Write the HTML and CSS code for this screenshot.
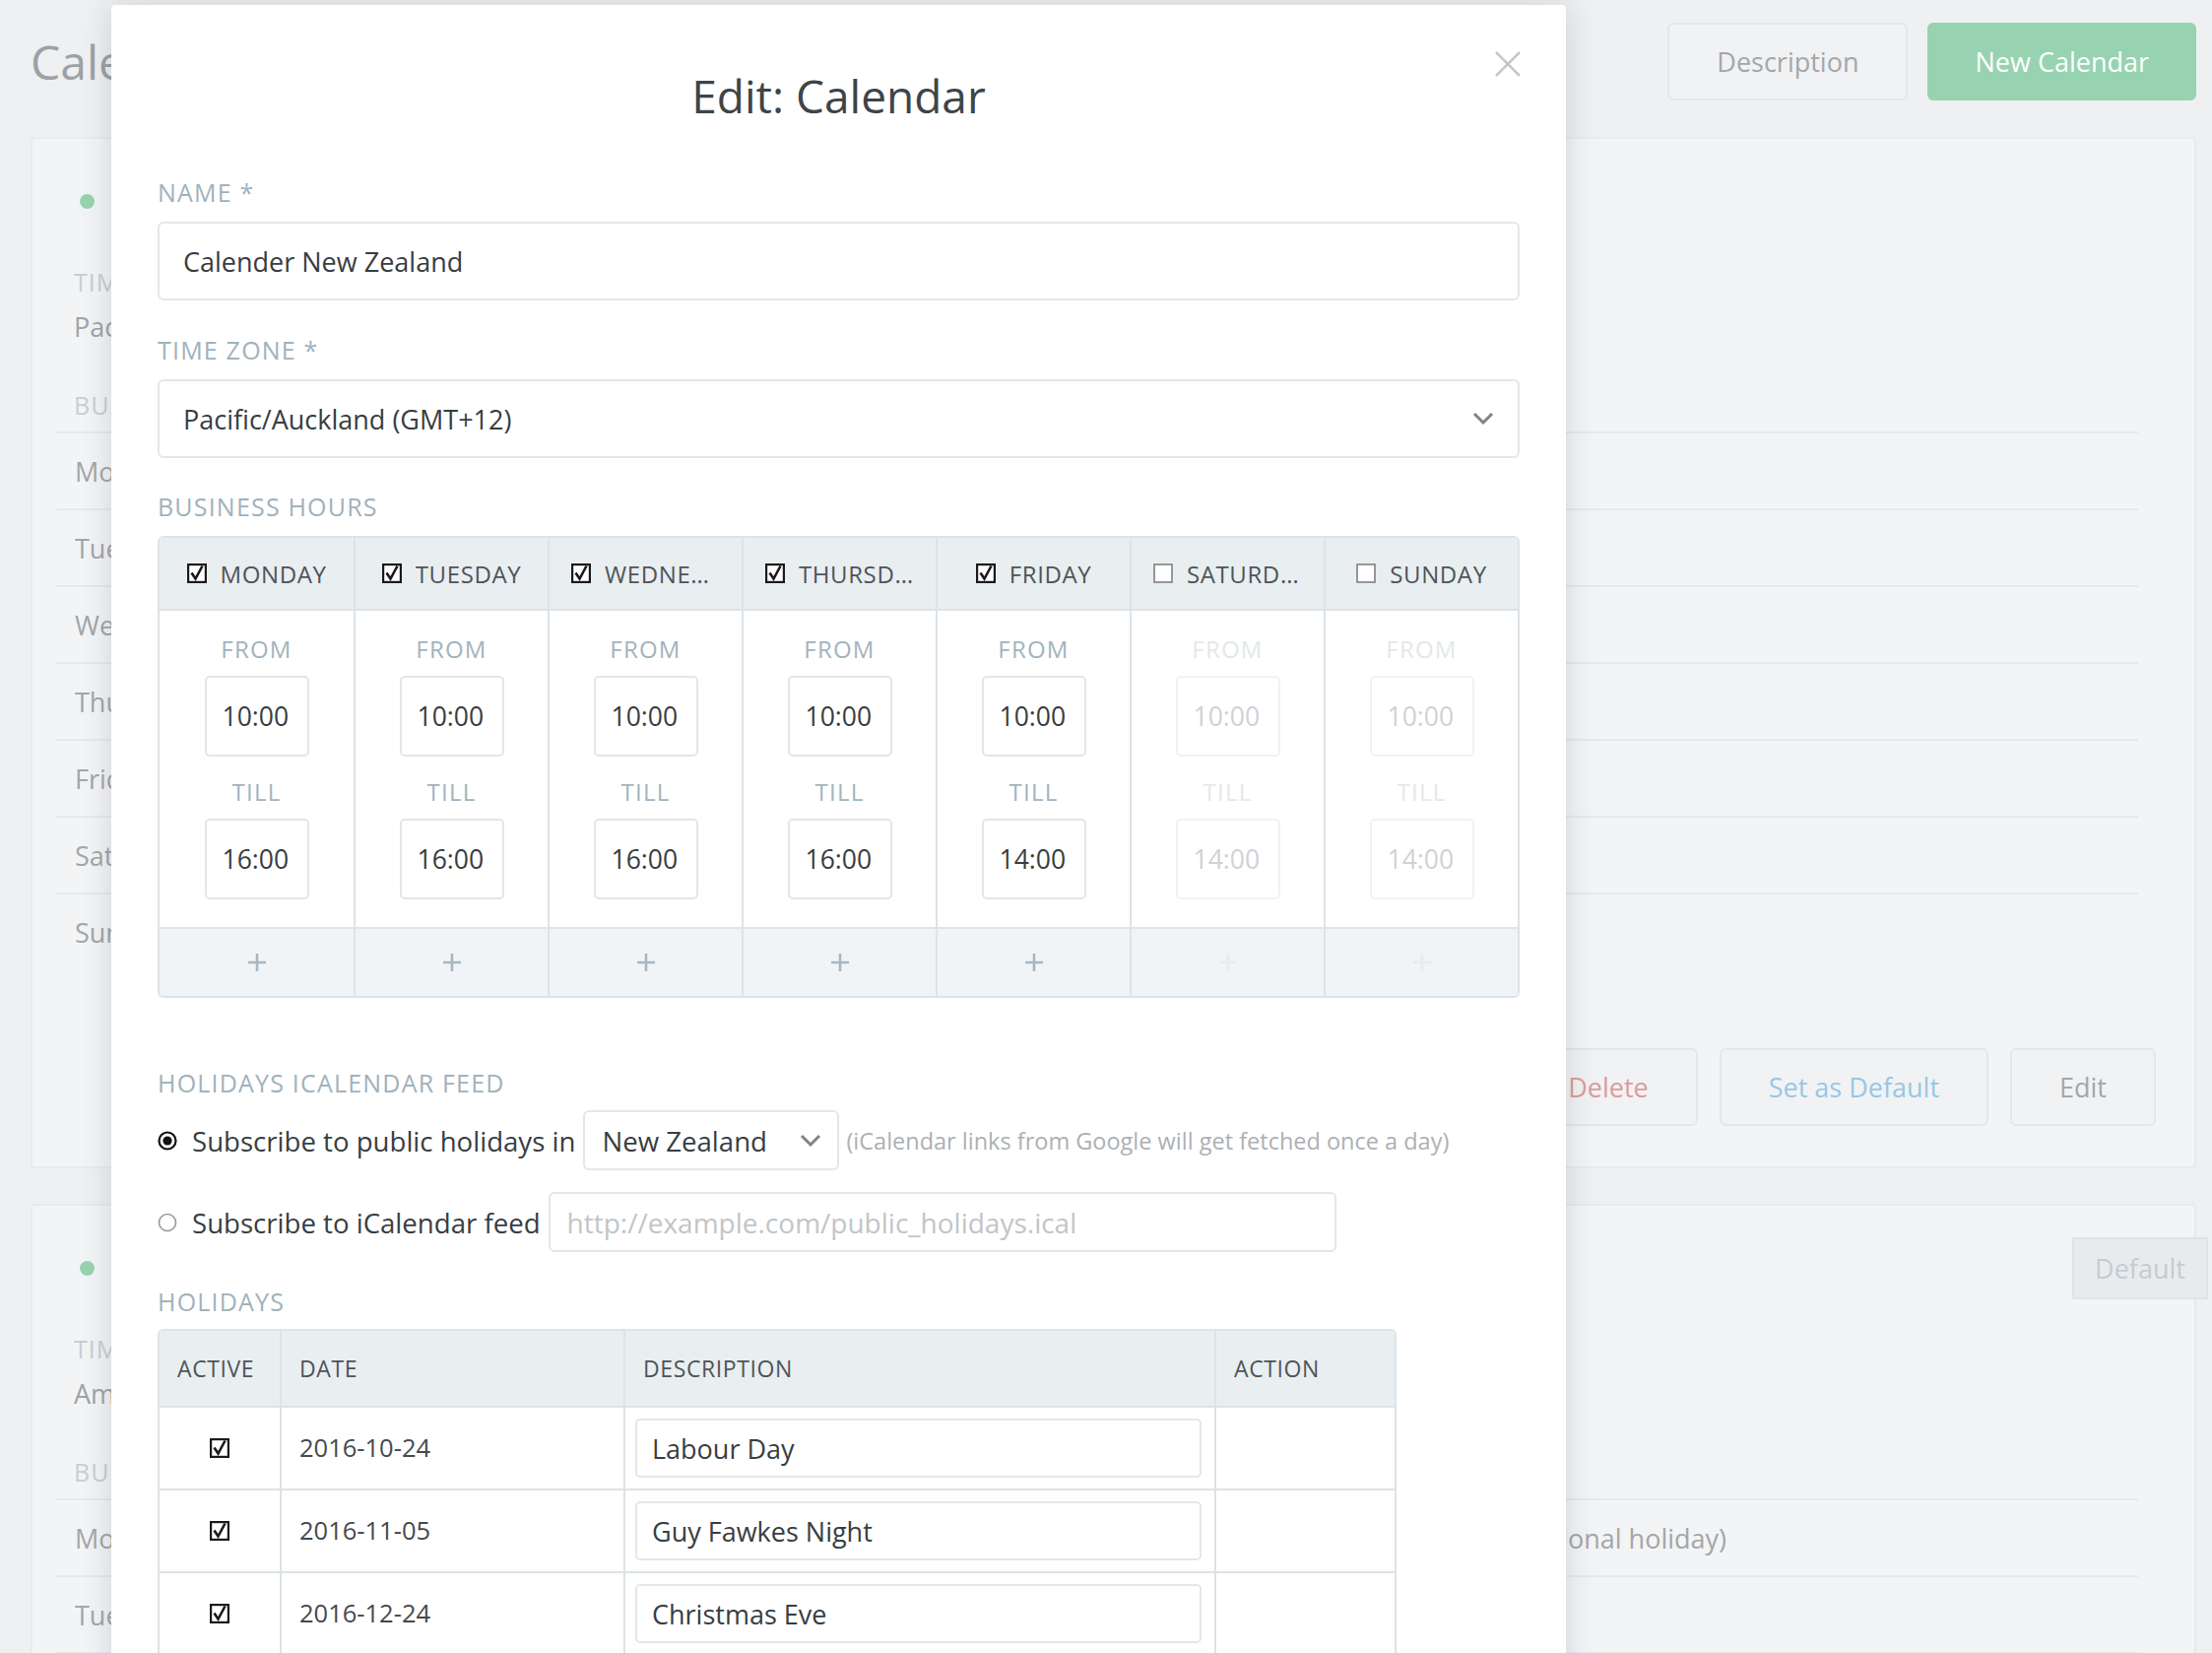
FILE: index.html
```html
<!DOCTYPE html>
<html lang="en">
<head>
<meta charset="utf-8">
<title>Edit: Calendar</title>
<link rel="stylesheet" href="styles.css">
</head>
<body>
<div class="app">
  <header class="page-head">
    <h1 class="page-title">Calendars</h1>
    <div class="page-actions">
      <button class="btn">Description</button>
      <button class="btn btn-green">New Calendar</button>
    </div>
  </header>

  <section class="card">
    <div class="card-head"><span class="dot"></span></div>
    <div class="bg-label">Timezone</div>
    <div class="bg-value">Pacific</div>
    <div class="bg-label bg-label-gap">Business</div>
    <div class="bg-rows">
      <div class="bg-row"><span>Monday</span><span></span><span></span></div>
      <div class="bg-row"><span>Tuesday</span><span></span><span></span></div>
      <div class="bg-row"><span>Wednesday</span><span></span><span></span></div>
      <div class="bg-row"><span>Thursday</span><span></span><span></span></div>
      <div class="bg-row"><span>Friday</span><span></span><span></span></div>
      <div class="bg-row"><span>Saturday</span><span></span><span></span></div>
      <div class="bg-row"><span>Sunday</span><span></span><span></span></div>
    </div>
    <div class="card-actions">
      <button class="btn btn-danger">Delete</button>
      <button class="btn btn-info">Set as Default</button>
      <button class="btn">Edit</button>
    </div>
  </section>

  <section class="card card-second">
    <div class="card-head"><span class="dot"></span><span class="badge">Default</span></div>
    <div class="bg-label">Time</div>
    <div class="bg-value">America</div>
    <div class="bg-label bg-label-gap">Business</div>
    <div class="bg-rows">
      <div class="bg-row"><span>Monday</span><span></span><span>(national holiday)</span></div>
      <div class="bg-row"><span>Tuesday</span><span></span><span></span></div>
      <div class="bg-row"><span>Wednesday</span><span></span><span></span></div>
    </div>
  </section>
</div>

<div class="modal">
  <button class="close" aria-label="Close">
    <svg viewBox="0 0 26 26" width="26" height="26"><path d="M1 1L25 25M25 1L1 25" stroke="#c4c7ca" stroke-width="2.5" fill="none"/></svg>
  </button>
  <div class="modal-head">
    <h2 class="modal-title">Edit: Calendar</h2>
  </div>

  <div class="field-label label-name">Name *</div>
  <div class="form-input">Calender New Zealand</div>

  <div class="field-label label-gap">Time Zone *</div>
  <div class="form-input form-select">
    <span>Pacific/Auckland (GMT+12)</span>
    <svg viewBox="0 0 22 14" width="22" height="14"><path d="M2 2L11 11L20 2" fill="none" stroke="#808285" stroke-width="3"/></svg>
  </div>

  <div class="field-label label-gap-b">Business Hours</div>
  <div class="hours">
    <div class="day">
      <div class="day-head"><svg class="cb" viewBox="0 0 20 20" width="20" height="20"><rect x="1.1" y="1.1" width="17.8" height="17.8" fill="#fff" stroke="#1a1a1a" stroke-width="2.2"/><path d="M4.5 9.5L8.5 15.5L15.5 2.5" fill="none" stroke="#1a1a1a" stroke-width="2.6"/></svg><span class="day-name">Monday</span></div>
      <div class="day-body"><div class="mini-label">From</div><div class="time-input">10:00</div><div class="mini-label mini-till">Till</div><div class="time-input">16:00</div></div>
      <div class="day-foot"><svg viewBox="0 0 20 20" width="20" height="20"><path d="M10 1V19M1 10H19" stroke="currentColor" stroke-width="2.6"/></svg></div>
    </div>
    <div class="day">
      <div class="day-head"><svg class="cb" viewBox="0 0 20 20" width="20" height="20"><rect x="1.1" y="1.1" width="17.8" height="17.8" fill="#fff" stroke="#1a1a1a" stroke-width="2.2"/><path d="M4.5 9.5L8.5 15.5L15.5 2.5" fill="none" stroke="#1a1a1a" stroke-width="2.6"/></svg><span class="day-name">Tuesday</span></div>
      <div class="day-body"><div class="mini-label">From</div><div class="time-input">10:00</div><div class="mini-label mini-till">Till</div><div class="time-input">16:00</div></div>
      <div class="day-foot"><svg viewBox="0 0 20 20" width="20" height="20"><path d="M10 1V19M1 10H19" stroke="currentColor" stroke-width="2.6"/></svg></div>
    </div>
    <div class="day">
      <div class="day-head"><svg class="cb" viewBox="0 0 20 20" width="20" height="20"><rect x="1.1" y="1.1" width="17.8" height="17.8" fill="#fff" stroke="#1a1a1a" stroke-width="2.2"/><path d="M4.5 9.5L8.5 15.5L15.5 2.5" fill="none" stroke="#1a1a1a" stroke-width="2.6"/></svg><span class="day-name">Wednesday</span></div>
      <div class="day-body"><div class="mini-label">From</div><div class="time-input">10:00</div><div class="mini-label mini-till">Till</div><div class="time-input">16:00</div></div>
      <div class="day-foot"><svg viewBox="0 0 20 20" width="20" height="20"><path d="M10 1V19M1 10H19" stroke="currentColor" stroke-width="2.6"/></svg></div>
    </div>
    <div class="day">
      <div class="day-head"><svg class="cb" viewBox="0 0 20 20" width="20" height="20"><rect x="1.1" y="1.1" width="17.8" height="17.8" fill="#fff" stroke="#1a1a1a" stroke-width="2.2"/><path d="M4.5 9.5L8.5 15.5L15.5 2.5" fill="none" stroke="#1a1a1a" stroke-width="2.6"/></svg><span class="day-name">Thursday</span></div>
      <div class="day-body"><div class="mini-label">From</div><div class="time-input">10:00</div><div class="mini-label mini-till">Till</div><div class="time-input">16:00</div></div>
      <div class="day-foot"><svg viewBox="0 0 20 20" width="20" height="20"><path d="M10 1V19M1 10H19" stroke="currentColor" stroke-width="2.6"/></svg></div>
    </div>
    <div class="day">
      <div class="day-head"><svg class="cb" viewBox="0 0 20 20" width="20" height="20"><rect x="1.1" y="1.1" width="17.8" height="17.8" fill="#fff" stroke="#1a1a1a" stroke-width="2.2"/><path d="M4.5 9.5L8.5 15.5L15.5 2.5" fill="none" stroke="#1a1a1a" stroke-width="2.6"/></svg><span class="day-name">Friday</span></div>
      <div class="day-body"><div class="mini-label">From</div><div class="time-input">10:00</div><div class="mini-label mini-till">Till</div><div class="time-input">14:00</div></div>
      <div class="day-foot"><svg viewBox="0 0 20 20" width="20" height="20"><path d="M10 1V19M1 10H19" stroke="currentColor" stroke-width="2.6"/></svg></div>
    </div>
    <div class="day day-off">
      <div class="day-head"><svg class="cb" viewBox="0 0 20 20" width="20" height="20"><rect x="1" y="1" width="18" height="18" fill="#fff" stroke="#8c8c8c" stroke-width="1.8"/></svg><span class="day-name">Saturday</span></div>
      <div class="day-body"><div class="mini-label">From</div><div class="time-input">10:00</div><div class="mini-label mini-till">Till</div><div class="time-input">14:00</div></div>
      <div class="day-foot"><svg viewBox="0 0 20 20" width="20" height="20"><path d="M10 1V19M1 10H19" stroke="currentColor" stroke-width="2.6"/></svg></div>
    </div>
    <div class="day day-off">
      <div class="day-head"><svg class="cb" viewBox="0 0 20 20" width="20" height="20"><rect x="1" y="1" width="18" height="18" fill="#fff" stroke="#8c8c8c" stroke-width="1.8"/></svg><span class="day-name">Sunday</span></div>
      <div class="day-body"><div class="mini-label">From</div><div class="time-input">10:00</div><div class="mini-label mini-till">Till</div><div class="time-input">14:00</div></div>
      <div class="day-foot"><svg viewBox="0 0 20 20" width="20" height="20"><path d="M10 1V19M1 10H19" stroke="currentColor" stroke-width="2.6"/></svg></div>
    </div>
  </div>

  <div class="field-label label-gap-feed">Holidays iCalendar Feed</div>
  <div class="radio-row radio-first">
    <svg class="radio" viewBox="0 0 20 20" width="20" height="20"><circle cx="10" cy="10" r="8.5" fill="#fff" stroke="#111" stroke-width="2.2"/><circle cx="10" cy="10" r="4.6" fill="#111"/></svg>
    <span class="radio-text">Subscribe to public holidays in</span>
    <div class="small-select"><span>New Zealand</span><svg viewBox="0 0 22 14" width="22" height="14"><path d="M2 2L11 11L20 2" fill="none" stroke="#808285" stroke-width="3"/></svg></div>
    <span class="hint">(iCalendar links from Google will get fetched once a day)</span>
  </div>
  <div class="radio-row radio-second">
    <svg class="radio" viewBox="0 0 20 20" width="20" height="20"><circle cx="10" cy="10" r="8.5" fill="#fff" stroke="#9a9a9a" stroke-width="1.6"/></svg>
    <span class="radio-text">Subscribe to iCalendar feed</span>
    <div class="url-input">http://example.com/public_holidays.ical</div>
  </div>

  <div class="field-label label-gap">Holidays</div>
  <div class="holidays">
    <div class="h-row h-head">
      <div class="h-cell">Active</div>
      <div class="h-cell">Date</div>
      <div class="h-cell">Description</div>
      <div class="h-cell">Action</div>
    </div>
    <div class="h-row">
      <div class="h-cell h-check"><svg viewBox="0 0 20 20" width="20" height="20"><rect x="1.1" y="1.1" width="17.8" height="17.8" fill="#fff" stroke="#1a1a1a" stroke-width="2.2"/><path d="M4.5 9.5L8.5 15.5L15.5 2.5" fill="none" stroke="#1a1a1a" stroke-width="2.6"/></svg></div>
      <div class="h-cell h-date">2016-10-24</div>
      <div class="h-cell"><div class="desc-input">Labour Day</div></div>
      <div class="h-cell"></div>
    </div>
    <div class="h-row">
      <div class="h-cell h-check"><svg viewBox="0 0 20 20" width="20" height="20"><rect x="1.1" y="1.1" width="17.8" height="17.8" fill="#fff" stroke="#1a1a1a" stroke-width="2.2"/><path d="M4.5 9.5L8.5 15.5L15.5 2.5" fill="none" stroke="#1a1a1a" stroke-width="2.6"/></svg></div>
      <div class="h-cell h-date">2016-11-05</div>
      <div class="h-cell"><div class="desc-input">Guy Fawkes Night</div></div>
      <div class="h-cell"></div>
    </div>
    <div class="h-row">
      <div class="h-cell h-check"><svg viewBox="0 0 20 20" width="20" height="20"><rect x="1.1" y="1.1" width="17.8" height="17.8" fill="#fff" stroke="#1a1a1a" stroke-width="2.2"/><path d="M4.5 9.5L8.5 15.5L15.5 2.5" fill="none" stroke="#1a1a1a" stroke-width="2.6"/></svg></div>
      <div class="h-cell h-date">2016-12-24</div>
      <div class="h-cell"><div class="desc-input">Christmas Eve</div></div>
      <div class="h-cell"></div>
    </div>
  </div>
</div>
</body>
</html>
```

FILE: styles.css
```css
* { box-sizing: border-box; }
html, body { margin: 0; padding: 0; }
body {
  width: 2246px;
  height: 1678px;
  overflow: hidden;
  position: relative;
  background: #eef0f2;
  font-family: "Open Sans", "Noto Sans", sans-serif;
}

/* ---------- background page ---------- */
.app { padding: 23px 16px 0 31px; }
.page-head {
  display: flex;
  justify-content: space-between;
  align-items: center;
  height: 79px;
}
.page-title {
  margin: 0;
  font-size: 48px;
  font-weight: 400;
  line-height: 79px;
  color: #9da1a5;
}
.page-actions { display: flex; gap: 20px; }
.btn {
  height: 79px;
  padding: 0 48px;
  border-radius: 6px;
  border: 2px solid #e4e6e9;
  background: #f1f2f4;
  font-family: inherit;
  font-size: 27px;
  line-height: 75px;
  color: #a4a7aa;
}
.btn-green { padding: 0 46px; background: #97d3b0; border-color: #97d3b0; color: #fff; }
.btn-danger { color: #dc9c9c; }
.btn-info { color: #98c7e5; }

.card {
  margin-top: 37px;
  background: #f3f4f6;
  border: 2px solid #e8eaed;
  border-radius: 4px;
  padding: 0 39px 41px 42px;
}
.card-second { margin-top: 36px; }
.card-head {
  display: flex;
  align-items: center;
  height: 95px;
  padding-top: 32px;
}
.dot {
  width: 15px;
  height: 15px;
  border-radius: 50%;
  background: #98d3b0;
  margin-left: 6px;
}
.badge {
  margin-left: auto;
  margin-right: -53px;
  height: 63px;
  width: 138px;
  background: #e8ebee;
  border: 2px solid #dfe3e6;
  color: #c5cbd0;
  font-size: 27px;
  line-height: 59px;
  text-align: center;
}
.bg-label {
  margin-top: 35px;
  font-size: 25px;
  line-height: 30px;
  letter-spacing: 1px;
  text-transform: uppercase;
  color: #c6cfd4;
}
.bg-value {
  margin-top: 13px;
  font-size: 27px;
  line-height: 36px;
  color: #9fa3a7;
}
.bg-label-gap { margin-top: 46px; }
.bg-rows { margin: 12px 18px 0 -18px; }
.bg-row {
  display: grid;
  grid-template-columns: 200px 1260px auto;
  align-items: center;
  height: 78px;
  padding-left: 19px;
  border-top: 2px solid #e6e9ec;
  font-size: 27px;
  color: #a3a6a9;
}
.card-actions {
  display: flex;
  justify-content: flex-end;
  gap: 22px;
  margin-top: 80px;
}

/* ---------- modal ---------- */
.modal {
  position: absolute;
  left: 113px;
  top: 5px;
  width: 1477px;
  height: 1720px;
  background: #fff;
  border-radius: 4px;
  box-shadow: 0 0 32px rgba(40, 50, 60, 0.16);
  padding: 0 47px;
  color: #3b4044;
}
.close {
  position: absolute;
  top: 47px;
  right: 46px;
  width: 26px;
  height: 26px;
  padding: 0;
  border: 0;
  background: none;
}
.close svg { display: block; }
.modal-head { padding-top: 65px; text-align: center; }
.modal-title {
  margin: 0;
  font-size: 46px;
  font-weight: 400;
  line-height: 54px;
  color: #3e4447;
}

.field-label {
  font-size: 25px;
  line-height: 30px;
  letter-spacing: 1.2px;
  text-transform: uppercase;
  color: #9fb2bc;
}
.label-name { margin-top: 56px; }
.label-gap { margin-top: 35px; }
.label-gap-b { margin-top: 34px; }
.label-gap-feed { margin-top: 71px; }

.form-input {
  margin-top: 15px;
  height: 80px;
  border: 2px solid #e4e7ea;
  border-radius: 6px;
  padding: 0 24px;
  display: flex;
  align-items: center;
  font-size: 27px;
  color: #383d41;
}
.form-select { justify-content: space-between; padding-right: 24px; }

/* business hours */
.hours {
  margin-top: 15px;
  display: grid;
  grid-template-columns: repeat(7, 1fr);
  border: 2px solid #dde3e7;
  border-radius: 6px;
  overflow: hidden;
}
.day { min-width: 0; display: flex; flex-direction: column; }
.day + .day { border-left: 2px solid #dde3e7; }
.day-head {
  height: 74px;
  border-bottom: 2px solid #dde3e7;
  background: #e9eef1;
  display: flex;
  align-items: center;
  justify-content: center;
  gap: 14px;
  padding: 0 22px;
}
.cb { flex: none; display: block; }
.day-name {
  min-width: 0;
  white-space: nowrap;
  overflow: hidden;
  text-overflow: ellipsis;
  font-size: 24px;
  letter-spacing: 0.6px;
  text-transform: uppercase;
  color: #4f5458;
}
.day-body {
  height: 321px;
  padding-top: 24px;
  display: flex;
  flex-direction: column;
  align-items: center;
}
.mini-label {
  font-size: 24px;
  line-height: 30px;
  letter-spacing: 1.2px;
  text-transform: uppercase;
  color: #a1b4be;
}
.mini-till { margin-top: 21px; }
.time-input {
  margin-top: 12px;
  width: 106px;
  height: 82px;
  border: 2px solid #e3e6e9;
  border-radius: 5px;
  padding-left: 16px;
  font-size: 26.5px;
  line-height: 78px;
  color: #383d41;
}
.day-foot {
  height: 70px;
  border-top: 2px solid #dde3e7;
  background: #f1f4f6;
  display: flex;
  align-items: center;
  justify-content: center;
  color: #a6b7c0;
}
.day-foot svg { display: block; }
.day-off .mini-label { color: #e3e8eb; }
.day-off .time-input { border-color: #f0f2f4; color: #cfd2d4; }
.day-off .day-foot { color: #e6ebee; }

/* holidays feed */
.radio-row {
  display: flex;
  align-items: center;
  height: 61px;
}
.radio-first { margin-top: 13px; }
.radio-second { margin-top: 22px; }
.radio { flex: none; display: block; }
.radio-text {
  margin-left: 15px;
  font-size: 27.6px;
  color: #383d41;
  white-space: nowrap;
}
.small-select {
  margin-left: 8px;
  width: 260px;
  height: 61px;
  border: 2px solid #e4e7ea;
  border-radius: 6px;
  padding: 0 16px 0 17px;
  display: flex;
  align-items: center;
  justify-content: space-between;
  font-size: 27.6px;
  color: #383d41;
}
.hint {
  margin-left: 7px;
  font-size: 23.5px;
  color: #adb0b3;
  white-space: nowrap;
}
.url-input {
  margin-left: 8px;
  width: 800px;
  height: 61px;
  border: 2px solid #e4e7ea;
  border-radius: 6px;
  padding-left: 17px;
  display: flex;
  align-items: center;
  font-size: 28px;
  color: #c2c5c8;
}

/* holidays table */
.holidays {
  margin-top: 13px;
  width: 1258px;
  border: 2px solid #dde3e7;
  border-bottom: 0;
  border-radius: 6px 6px 0 0;
  overflow: hidden;
}
.h-row {
  display: grid;
  grid-template-columns: 122px 349px 600px 1fr;
  height: 84px;
  border-top: 2px solid #dde3e7;
}
.h-head {
  height: 76px;
  border-top: 0;
  background: #e9eef1;
}
.h-cell {
  display: flex;
  align-items: center;
  min-width: 0;
}
.h-cell + .h-cell { border-left: 2px solid #dde3e7; }
.h-head .h-cell {
  padding-left: 18px;
  font-size: 23px;
  letter-spacing: 0.6px;
  text-transform: uppercase;
  color: #4f5458;
}
.h-check { justify-content: center; }
.h-check svg { display: block; }
.h-date {
  padding-left: 18px;
  padding-bottom: 3px;
  font-size: 25.5px;
  color: #45494d;
}
.desc-input {
  margin-left: 10px;
  width: 575px;
  height: 60px;
  border: 2px solid #e4e7ea;
  border-radius: 5px;
  padding-left: 15px;
  display: flex;
  align-items: center;
  font-size: 27px;
  color: #383d41;
}
```
